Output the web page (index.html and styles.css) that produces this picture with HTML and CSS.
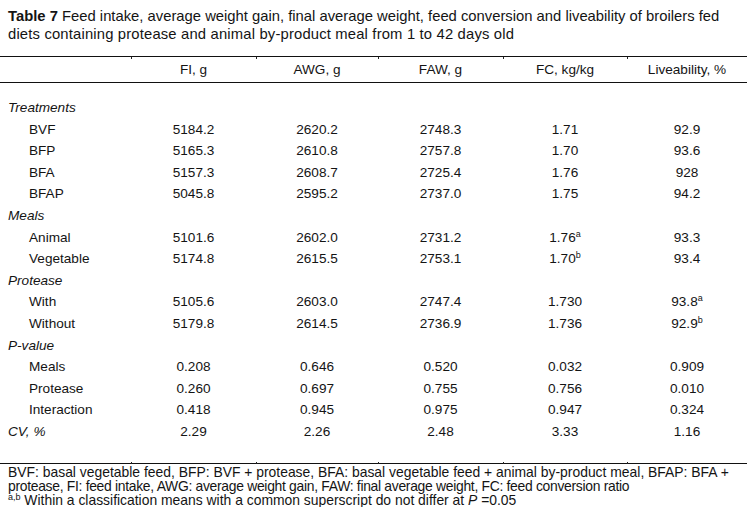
FILE: index.html
```html
<!DOCTYPE html>
<html>
<head>
<meta charset="utf-8">
<link rel="stylesheet" href="styles.css">
</head>
<body>
<div class="caption"><b>Table 7</b> Feed intake, average weight gain, final average weight, feed conversion and liveability of broilers fed <span class="cap2">diets containing protease and animal by-product meal from 1 to 42 days old</span></div>
<table class="data">
<colgroup>
<col class="c0"><col class="c1"><col class="c2"><col class="c3"><col class="c4"><col class="c5">
</colgroup>
<thead>
<tr><th class="tk0"></th><th class="tk">FI, g</th><th class="tk">AWG, g</th><th class="tk">FAW, g</th><th class="tk">FC, kg/kg</th><th class="tk">Liveability, %</th></tr>
</thead>
<tbody>
<tr class="first"><td class="grp">Treatments</td><td></td><td></td><td></td><td></td><td></td></tr>
<tr><td class="sub">BVF</td><td>5184.2</td><td>2620.2</td><td>2748.3</td><td>1.71</td><td>92.9</td></tr>
<tr><td class="sub">BFP</td><td>5165.3</td><td>2610.8</td><td>2757.8</td><td>1.70</td><td>93.6</td></tr>
<tr><td class="sub">BFA</td><td>5157.3</td><td>2608.7</td><td>2725.4</td><td>1.76</td><td>928</td></tr>
<tr><td class="sub">BFAP</td><td>5045.8</td><td>2595.2</td><td>2737.0</td><td>1.75</td><td>94.2</td></tr>
<tr><td class="grp">Meals</td><td></td><td></td><td></td><td></td><td></td></tr>
<tr><td class="sub">Animal</td><td>5101.6</td><td>2602.0</td><td>2731.2</td><td>1.76<sup>a</sup></td><td>93.3</td></tr>
<tr><td class="sub">Vegetable</td><td>5174.8</td><td>2615.5</td><td>2753.1</td><td>1.70<sup>b</sup></td><td>93.4</td></tr>
<tr><td class="grp">Protease</td><td></td><td></td><td></td><td></td><td></td></tr>
<tr><td class="sub">With</td><td>5105.6</td><td>2603.0</td><td>2747.4</td><td>1.730</td><td>93.8<sup>a</sup></td></tr>
<tr><td class="sub">Without</td><td>5179.8</td><td>2614.5</td><td>2736.9</td><td>1.736</td><td>92.9<sup>b</sup></td></tr>
<tr><td class="grp">P-value</td><td></td><td></td><td></td><td></td><td></td></tr>
<tr><td class="sub">Meals</td><td>0.208</td><td>0.646</td><td>0.520</td><td>0.032</td><td>0.909</td></tr>
<tr><td class="sub">Protease</td><td>0.260</td><td>0.697</td><td>0.755</td><td>0.756</td><td>0.010</td></tr>
<tr><td class="sub">Interaction</td><td>0.418</td><td>0.945</td><td>0.975</td><td>0.947</td><td>0.324</td></tr>
<tr class="last"><td class="grp">CV, %</td><td>2.29</td><td>2.26</td><td>2.48</td><td>3.33</td><td>1.16</td></tr>
</tbody>
<tfoot>
<tr><td class="tk0"></td><td class="tkf"></td><td class="tkf"></td><td class="tkf"></td><td class="tkf"></td><td class="tkf"></td></tr>
</tfoot>
</table>
<div class="notes">
<p>BVF: basal vegetable feed, BFP: BVF + protease, BFA: basal vegetable feed + animal by-product meal, BFAP: BFA + <span class="note2">protease, FI: feed intake, AWG: average weight gain, FAW: final average weight, FC: feed conversion ratio</span></p>
<p><sup class="nsup">a,b</sup> Within a classification means with a common superscript do not differ at <i>P</i> =0.05</p>
</div>
</body>
</html>
```
FILE: styles.css
```css
html, body {
  margin: 0;
  padding: 0;
  background: #ffffff;
}
body {
  font-family: "Liberation Sans", Arial, sans-serif;
  color: #141414;
  width: 747px;
}
.caption {
  font-size: 14.8px;
  line-height: 18px;
  padding: 7px 6px 0 8px;
  margin-bottom: 13px;
}
.caption b {
  font-weight: bold;
}
.cap2 {
  letter-spacing: 0.17px;
}
.data {
  width: 747px;
  table-layout: fixed;
  border-collapse: collapse;
  font-size: 13.6px;
}
.c0 { width: 131px; }
.c1 { width: 125px; }
.c2 { width: 122px; }
.c3 { width: 125px; }
.c4 { width: 124px; }
.c5 { width: 120px; }
.data thead tr {
  border-top: 1.5px solid #111;
  border-bottom: 1.5px solid #111;
}
.data th {
  font-weight: normal;
  height: 25px;
  padding: 0;
  text-align: center;
  vertical-align: middle;
}
.tk {
  position: relative;
}
.tk::before {
  content: "";
  position: absolute;
  left: 0;
  top: 0;
  width: 1px;
  height: 2px;
  background: #222;
}
.data td {
  padding: 0;
  height: 21.6px;
  line-height: 21.6px;
  text-align: center;
  white-space: nowrap;
}
.data td.grp {
  text-align: left;
  font-style: italic;
  padding-left: 8px;
}
.data td.sub {
  text-align: left;
  padding-left: 29px;
}
.data tr.first td {
  padding-top: 14px;
}
.data tr.last td {
  padding-bottom: 20px;
}
.data tfoot tr {
  border-top: 1.5px solid #111;
}
.data tfoot td {
  height: 0;
  line-height: 0;
  padding: 0;
}
.tkf {
  position: relative;
}
.tkf::before {
  content: "";
  position: absolute;
  left: 0;
  bottom: 0;
  width: 1px;
  height: 2px;
  background: #222;
}
sup {
  font-size: 9px;
  line-height: 0;
  vertical-align: 5px;
}
.notes {
  font-size: 13.9px;
  line-height: 14px;
  padding: 1px 8px 0 8px;
}
.notes p {
  margin: 0;
}
.note2 {
  letter-spacing: -0.3px;
}
.nsup {
  font-size: 9px;
  line-height: 0;
  vertical-align: 5px;
}
```
